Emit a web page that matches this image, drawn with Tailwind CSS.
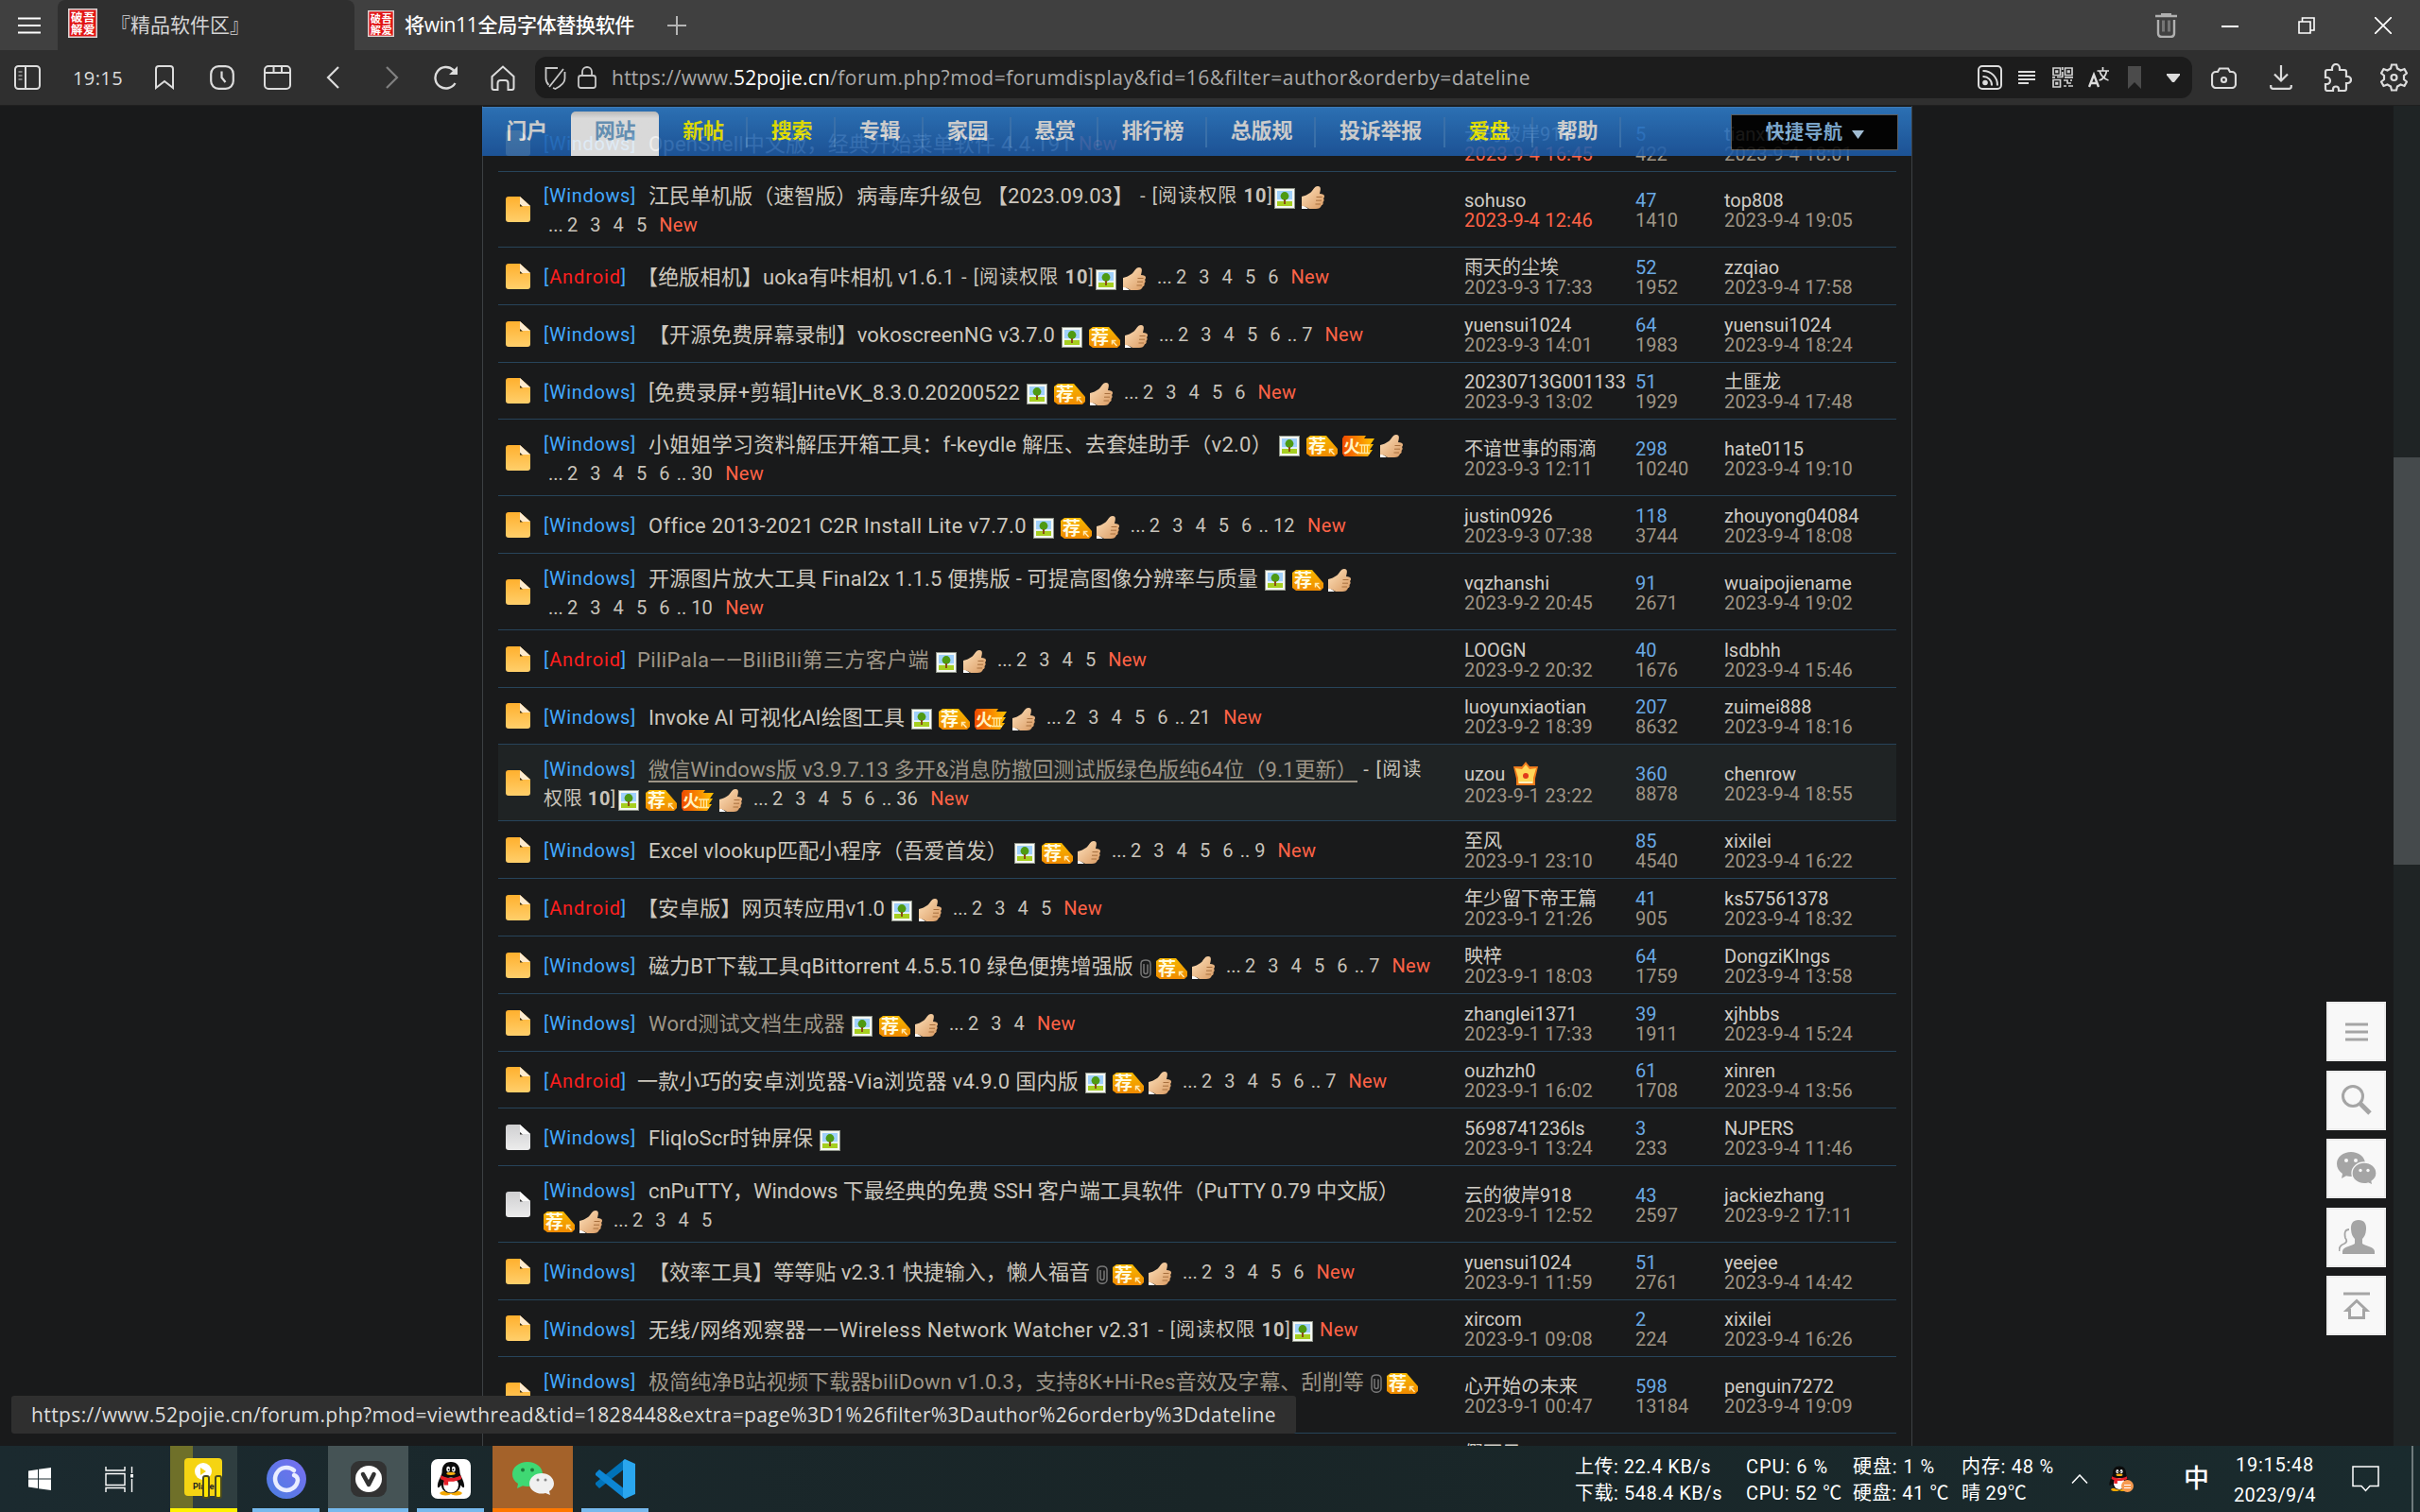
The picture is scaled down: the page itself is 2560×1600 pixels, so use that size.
<!DOCTYPE html>
<html lang="zh-CN">
<head>
<meta charset="utf-8">
<title>『精品软件区』</title>
<script src="https://cdn.jsdelivr.net/npm/@tailwindcss/browser@4"></script>
</head>
<body class="w-[2560px] h-[1600px] overflow-hidden bg-[#191a1b] font-['Roboto','Noto_Sans_CJK_SC',sans-serif] text-[#c8c3ba]">
<svg class="absolute w-0 h-0">
  <defs>
    <linearGradient id="gy" x1="0" y1="0" x2="0" y2="1"><stop offset="0" stop-color="#ffb02e"/><stop offset="1" stop-color="#ffcf6b"/></linearGradient>
    <linearGradient id="gw" x1="0" y1="0" x2="0" y2="1"><stop offset="0" stop-color="#cfcfd1"/><stop offset="1" stop-color="#ececec"/></linearGradient>
    <linearGradient id="gj" x1="0" y1="0" x2="0" y2="1"><stop offset="0" stop-color="#f6b800"/><stop offset="1" stop-color="#f08a00"/></linearGradient>
    <linearGradient id="gh" x1="0" y1="0" x2="1" y2="0"><stop offset="0" stop-color="#f04a00"/><stop offset="1" stop-color="#ffc400"/></linearGradient>
    <linearGradient id="gt" x1="0" y1="0" x2="1" y2="1"><stop offset="0" stop-color="#ffe2bc"/><stop offset="1" stop-color="#d99a62"/></linearGradient>
    <symbol id="doc-y" viewBox="0 0 26 27"><path d="M3 0H15L26 10V24a3 3 0 0 1-3 3H3a3 3 0 0 1-3-3V3a3 3 0 0 1 3-3z" fill="url(#gy)"/><path d="M15 0L26 10H17a2 2 0 0 1-2-2z" fill="#fdebcf"/><path d="M15 8v2.500h3z" fill="#3a2c10"/></symbol>
    <symbol id="doc-w" viewBox="0 0 26 27"><path d="M3 0H15L26 10V24a3 3 0 0 1-3 3H3a3 3 0 0 1-3-3V3a3 3 0 0 1 3-3z" fill="url(#gw)"/><path d="M15 0L26 10H17a2 2 0 0 1-2-2z" fill="#fafafa"/><path d="M15 8v2.500h3z" fill="#333"/></symbol>
    <symbol id="img" viewBox="0 0 22 22"><path d="M0 0H22V22H0z" fill="#8f9489"/><path d="M1 1H21V21H1z" fill="#f4f7f2"/><path d="M3 3H19V14H3z" fill="#9fd0fb"/><path d="M3 12H19V14H3z" fill="#dff0fb"/><path d="M3 14H19V19H3z" fill="#a6cf20"/><circle cx="11" cy="8.500" r="4.400" fill="#4e9a12"/><path d="M10 12h2v5h-2z" fill="#8a4d14"/></symbol>
    <symbol id="thumb" viewBox="0 0 24 24"><path d="M0 19l7 5H0z" fill="#fff"/><path d="M0 11C4 10 6 9 9 7 12 5 13 0 17 0c4 0 3 4 2 8 3 0 5 1 5 2.500c0 1.500-.5 2-1 2.500 1 1 .8 3-.5 4 .5 1 0 3-1.500 3.200C20 23 18 24 15 24H8C5 22 3 21 0 21z" fill="url(#gt)"/><path d="M15.500 11.500h6M15 15.200h6M14.500 19h5.500" stroke="#a8703f" stroke-width="1"/></symbol>
    <symbol id="clip" viewBox="0 0 12 20"><path d="M4 5v8.500a2 2 0 0 0 4 0V5.500M1 15V4.500C1 2 3 1 6 1s5 1 5 4V15a5 4.300 0 0 1-10 0z" fill="none" stroke="#777" stroke-width="1.500"/></symbol>
    <symbol id="jian" viewBox="0 0 33 22"><path d="M4 0H21L33 14V19l-3 3H4L0 19V3z" fill="url(#gj)"/><text x="2" y="18" font-size="19" font-weight="700" fill="#fffbe0" font-family="Noto Sans CJK SC">荐</text><path d="M29.500 20l-5-5.500M24.500 18.500v-4h4" stroke="#ffe9b0" stroke-width="1.500" fill="none"/></symbol>
    <symbol id="huo" viewBox="0 0 34 22"><path d="M2 0H25l-2 3H34l-4 6h3l-4 6h3l-5 7H2L0 19V3z" fill="url(#gh)"/><text x="1" y="18" font-size="18" font-weight="700" fill="#fff3c0" font-family="Noto Sans CJK SC">火</text><path d="M18 10h11M18 18.500h11M20.500 10v8M23.500 10v8M26.500 10v8" stroke="#ffe9a0" stroke-width="1.300"/></symbol>
    <symbol id="crown" viewBox="0 0 26 26"><path d="M13 0l4 5 9 0-3 13v7H3v-7L0 5h9z" fill="#ee7a1c"/><path d="M13 3l4 5 7-1-3 10v6H5v-6L2 7l7 1z" fill="#ffd75a"/><circle cx="13" cy="15" r="3" fill="#e03a1a"/><path d="M6 21h14v2H6z" fill="#fff2c0"/></symbol>
    <symbol id="seal" viewBox="0 0 30 30"><path d="M0 0H30V30H0z" fill="#d9d4d4"/><path d="M1.500 1.500H28.500V28.500H1.500z" fill="#e21414"/><g font-size="12" font-weight="700" fill="#fff" font-family="Noto Sans CJK SC"><text x="3" y="14">破</text><text x="15.500" y="14">吾</text><text x="3" y="26.500">解</text><text x="15.500" y="26.500">爱</text></g></symbol>
    <symbol id="qq" viewBox="0 0 34 38"><ellipse cx="11" cy="35" rx="6.500" ry="2.500" fill="#f5a800"/><ellipse cx="23" cy="35" rx="6.500" ry="2.500" fill="#f5a800"/><path d="M17 0c7 0 10 5 10 11 0 4 5 10 5 16 0 3-2 2-4-1-1 6-5 9-11 9S7 32 6 26c-2 3-4 4-4 1 0-6 5-12 5-16C7 5 10 0 17 0z" fill="#0b0b0b"/><ellipse cx="17" cy="26" rx="8.500" ry="8.500" fill="#fff"/><path d="M6 15c7 4 15 4 22 0l1 4c-8 4-16 4-24 0z" fill="#e6202a"/><path d="M9 19h5v7H9z" fill="#e6202a"/><ellipse cx="14" cy="8" rx="2" ry="3" fill="#fff"/><ellipse cx="20" cy="8" rx="2" ry="3" fill="#fff"/><circle cx="14.500" cy="8.500" r="1" fill="#000"/><circle cx="19.500" cy="8.500" r="1" fill="#000"/><ellipse cx="17" cy="13" rx="5" ry="1.800" fill="#f9b012"/></symbol>
  </defs>
</svg>

<div class="flex flex-col w-full h-full">
  <!-- tab strip -->
  <header class="flex items-center h-[53px] shrink-0 bg-[#404040] font-['Open_Sans','Noto_Sans_CJK_SC',sans-serif] text-[21px] whitespace-nowrap">
    <div class="w-[61px] shrink-0 flex justify-center"><svg class="w-6 h-[18px]" viewBox="0 0 24 18"><path d="M0 1.500h24M0 9h24M0 16.500h24" stroke="#fff" stroke-width="2"/></svg></div>
    <div class="w-[314px] shrink-0 h-full bg-[#2f2f2f] rounded-t-[8px] flex items-center pl-[11px] text-[#d4d4d4]">
      <svg class="w-[31px] h-[31px] mt-[-4px] shrink-0"><use href="#seal"/></svg>
      <span class="ml-[14px]" data-fit="147">『精品软件区』</span>
    </div>
    <div class="w-[312px] shrink-0 h-full flex items-center pl-[14px] text-white font-medium">
      <svg class="w-[28px] h-[28px] mt-[-3px] shrink-0"><use href="#seal"/></svg>
      <span class="ml-[11px]" data-fit="243">将win11全局字体替换软件</span>
    </div>
    <svg class="w-5 h-5 ml-[19px]" viewBox="0 0 20 20"><path d="M10 0v20M0 10h20" stroke="#b5b5b5" stroke-width="2"/></svg>
    <div class="ml-auto flex items-center pr-[30px]">
      <svg class="w-[23px] h-[26px] mr-[47px]" viewBox="0 0 23 26" fill="none" stroke="#b0b0b0"><path d="M0 3h23M6 1h11" stroke-width="2.500"/><path d="M3 7v14q0 4 4 4h9q4 0 4-4V7" stroke-width="2.400"/><path d="M8.500 7.500v12M14.500 7.500v12" stroke="#757575" stroke-width="3"/></svg>
      <svg class="w-[18px] h-[18px] mr-[63px]" viewBox="0 0 18 18"><path d="M0 10h18" stroke="#fff" stroke-width="2"/></svg>
      <svg class="w-[18px] h-[18px] mr-[63px]" viewBox="0 0 18 18" fill="none" stroke="#fff" stroke-width="1.600"><path d="M1 5h12v12H1zM4.500 5V1H17v13h-4"/></svg>
      <svg class="w-[18px] h-[18px]" viewBox="0 0 18 18"><path d="M0 0l18 18M18 0L0 18" stroke="#fff" stroke-width="1.700"/></svg>
    </div>
  </header>

  <!-- address bar -->
  <div class="flex items-center h-[59px] shrink-0 bg-[#2f2f2f] border-b border-[#1f1f1f] font-['Open_Sans','Noto_Sans_CJK_SC',sans-serif] whitespace-nowrap">
    <svg class="w-7 h-[26px] ml-[15px]" viewBox="0 0 28 26" fill="none" stroke="#dcdcdc" stroke-width="2"><rect x="1" y="1" width="26" height="24" rx="3.500"/><path d="M12 1v24"/><path d="M4.500 7h4M4.500 11h4M4.500 15h4" stroke="#999" stroke-width="1.500"/></svg>
    <span class="ml-[34px] mt-[2px] text-[20px] text-[#dcdcdc]" data-fit="53">19:15</span>
    <svg class="w-5 h-[26px] ml-[34px]" viewBox="0 0 20 26" fill="none" stroke="#dcdcdc" stroke-width="2"><path d="M1 24V4q0-3 3-3h12q3 0 3 3v20l-9-7z"/></svg>
    <svg class="w-[26px] h-[26px] ml-[38px]" viewBox="0 0 26 26" fill="none" stroke="#dcdcdc" stroke-width="2.200"><rect x="1.200" y="1.200" width="23.600" height="23.600" rx="8"/><path d="M12.500 6.500V13l4 5"/></svg>
    <svg class="w-[29px] h-[26px] ml-[31px]" viewBox="0 0 29 26" fill="none" stroke="#dcdcdc" stroke-width="2"><rect x="1" y="1" width="27" height="24" rx="4"/><path d="M1 8h27M10.500 1v7M19 1v7"/></svg>
    <svg class="w-[14px] h-6 ml-[37px]" viewBox="0 0 14 24" fill="none" stroke="#dcdcdc" stroke-width="2.200"><path d="M13 1L2 12l11 11"/></svg>
    <svg class="w-[14px] h-6 ml-[49px]" viewBox="0 0 14 24" fill="none" stroke="#808080" stroke-width="2.200"><path d="M1 1l11 11L1 23"/></svg>
    <svg class="w-[26px] h-[26px] ml-[37px]" viewBox="0 0 26 26" fill="none" stroke="#dcdcdc" stroke-width="2.400"><path d="M22.500 19A11.300 11.300 0 1 1 20.500 5l3.500 4"/><path d="M25 1v9h-9z" fill="#dcdcdc" stroke="none"/></svg>
    <svg class="w-[26px] h-[27px] ml-[34px]" viewBox="0 0 26 27" fill="none" stroke="#dcdcdc" stroke-width="2"><path d="M1.500 12L13 1.500 24.500 12v12q0 2-2 2h-4v-7a3 3 0 0 0-3-3h-5a3 3 0 0 0-3 3v7h-4q-2 0-2-2z"/></svg>
    <div class="flex items-center w-[1753px] shrink-0 h-[44px] ml-[21px] bg-[#1c1c1c] rounded-[12px] pl-[10px] pr-[13px]">
      <svg class="w-[23px] h-[25px]" viewBox="0 0 23 25" fill="none" stroke="#c8c8c8" stroke-width="1.800"><path d="M14 2H1.500v11q0 4 3 7M9 23l2.500 1c6-3 10-6 10-11V6M20 3L5 22"/></svg>
      <svg class="w-5 h-6 ml-[12px]" viewBox="0 0 20 24" fill="none" stroke="#c8c8c8" stroke-width="1.800"><rect x="1" y="10" width="18" height="13" rx="2.500"/><path d="M5 10V6a5 5 0 0 1 10 0v4"/></svg>
      <div class="ml-[16px] mt-[2px] text-[21px] text-[#a9a9a9] flex whitespace-pre"><span data-fit="129">https://www.</span><span class="text-white" data-fit="102">52pojie.cn</span><span data-fit="741">/forum.php?mod=forumdisplay&amp;fid=16&amp;filter=author&amp;orderby=dateline</span></div>
      <div class="ml-auto flex items-center">
        <svg class="w-[26px] h-[26px]" viewBox="0 0 26 26" fill="none" stroke="#dcdcdc" stroke-width="2"><rect x="1" y="1" width="24" height="24" rx="4"/><path d="M5.500 6A15 15 0 0 1 21 21.500M5.500 12a9 9 0 0 1 9.500 9.500"/><circle cx="8" cy="18.500" r="2.800" fill="#dcdcdc" stroke="none"/></svg>
        <svg class="w-[18px] h-[15px] ml-[17px]" viewBox="0 0 18 15"><path d="M0 1h18M0 5h18M0 9h18M0 13h11" stroke="#dcdcdc" stroke-width="1.800"/></svg>
        <svg class="w-[22px] h-[22px] ml-[18px]" viewBox="0 0 22 22" fill="none" stroke="#d0d0d0" stroke-width="1.700"><path d="M1 1h7.500v7.500H1zM13.500 1H21v7.500h-7.500zM1 13.500h7.500V21H1zM10.800 0v3M10.800 5v5.500H5M0 10.800h3M13 10.800h9M12 14h4v3h4M12 20h3M17 20h5M20 13v2"/><path d="M4 4h1.500v1.500H4zM16.500 4H18v1.500h-1.500zM4 16.500h1.500V18H4z"/></svg>
        <svg class="w-[23px] h-[22px] ml-[16px]" viewBox="0 0 23 22" fill="none" stroke="#dcdcdc"><path d="M1 21L6 8l5 13M3 17h6.500" stroke-width="2.400"/><path d="M9.500 4H22M15.500 0v4M11.500 14c4-1 7-4 8-10M12 4c1 4 5 9 9.500 10" stroke-width="1.700"/></svg>
        <svg class="w-[14px] h-6 ml-[19px]" viewBox="0 0 14 24"><path d="M0 0h14v24l-7-7-7 7z" fill="#4b4b4b"/></svg>
        <svg class="w-[14px] h-[9px] ml-[27px]" viewBox="0 0 14 9"><path d="M0 0h14v1.500L8 9H6L0 1.500z" fill="#dcdcdc"/></svg>
      </div>
    </div>
    <svg class="w-[27px] h-[23px] ml-[20px]" viewBox="0 0 27 23" fill="none" stroke="#dcdcdc" stroke-width="2.200"><path d="M1 9a4 4 0 0 1 4-4h2l2-3.500h9L20 5h2a4 4 0 0 1 4 4v9a4 4 0 0 1-4 4H5a4 4 0 0 1-4-4z"/><circle cx="13.500" cy="13.500" r="2.500"/></svg>
    <svg class="w-[24px] h-[26px] ml-[35px]" viewBox="0 0 24 26" fill="none" stroke="#dcdcdc" stroke-width="2.200"><path d="M12 0v16M5 9.500l7 7 7-7M1.200 21v1.500q0 2.300 2.300 2.300h17q2.300 0 2.300-2.300V21"/></svg>
    <svg class="w-[30px] h-[30px] ml-[33px]" viewBox="0 0 30 30" fill="none" stroke="#dcdcdc" stroke-width="2.200"><path d="M2 9q0-2 2-2h5V5a4 4 0 0 1 8 0v2h5q2 0 2 2v5h1.500a3.500 3.500 0 0 1 0 7H24v6q0 2-2 2h-6v-1.500a3 3 0 0 0-6 0V29H4q-2 0-2-2v-5h1.500a3.500 3.500 0 0 0 0-7H2z"/></svg>
    <svg class="w-[29px] h-[30px] ml-[30px]" viewBox="0 0 29 30" fill="none" stroke="#dcdcdc" stroke-width="2.200"><path d="M12 1.500h5l1 4 3.500 2 4-1.500 2.500 4.500-3 2.500v4l3 2.500-2.500 4.500-4-1.500-3.500 2-1 4h-5l-1-4-3.500-2-4 1.500L1 19.500 4 17v-4L1 10.500 3.500 6l4 1.500 3.500-2z"/><circle cx="14.500" cy="15" r="3"/></svg>
  </div>

  <!-- page -->
  <div class="relative flex h-[1418px] shrink-0 overflow-hidden">
    <main class="relative ml-[510px] w-[1513px] border-x border-[#3c4043]">
      <nav class="absolute z-10 left-[-1px] top-[1px] w-[1512px] h-[52px] flex items-stretch opacity-[.88] bg-linear-to-b from-[#2f7cc8] to-[#1d5aa6] text-[22px] font-bold text-[#e4e4e4] border-t border-[#4288cc]" id="nav"></nav>
      <div class="px-4 pt-[9px]" id="list"></div>
    </main>
    <aside class="flex flex-col gap-[9.500px] ml-auto mr-[8px] mt-[948px]">
      <div class="w-[63px] h-[63px] bg-[#f8f8f8] border-2 border-[#ececec] flex items-center justify-center"><svg class="w-6 h-5" viewBox="0 0 24 20"><path d="M0 2h24M0 10h24M0 18h24" stroke="#a5a5a5" stroke-width="3"/></svg></div>
      <div class="w-[63px] h-[63px] bg-[#f8f8f8] border-2 border-[#ececec] flex items-center justify-center"><svg class="w-8 h-8" viewBox="0 0 32 32" fill="none" stroke="#a5a5a5"><circle cx="12" cy="12" r="10.500" stroke-width="3"/><path d="M20 20l10 10" stroke-width="5"/></svg></div>
      <div class="w-[63px] h-[63px] bg-[#f8f8f8] border-2 border-[#ececec] flex items-center justify-center"><svg class="w-[42px] h-[35px]" viewBox="0 0 42 35"><path d="M15 0c8 0 15 5 15 12.500S23 26 15 26q-3 0-5-.8L5 28l1-5C2 20 0 16.500 0 12.500 0 5 7 0 15 0z" fill="#a5a5a5"/><path d="M29 11c7 0 13 5 13 11.500 0 3.500-2 6.500-5 8.500l1 4-5-2q-2 .7-4 .7c-7 0-13-4.700-13-11.200S22 11 29 11z" fill="#a5a5a5" stroke="#f8f8f8" stroke-width="1.300"/><g fill="#f8f8f8"><circle cx="10" cy="9" r="2"/><circle cx="20" cy="9" r="2"/><circle cx="25" cy="19.500" r="1.700"/><circle cx="33" cy="19.500" r="1.700"/></g></svg></div>
      <div class="w-[63px] h-[63px] bg-[#f8f8f8] border-2 border-[#ececec] flex items-center justify-center"><svg class="w-[38px] h-9" viewBox="0 0 38 36"><path d="M21 0c6 0 8.500 4 8 10-.3 5-2 8-4 10v5c4 3 12 3 13 8v3H4v-3c1-5 9-5 13-8v-5c-2-2-3.700-5-4-10-.5-6 2-10 8-10z" fill="#a5a5a5"/><path d="M11 10q-6 0-4 9 3 4-1 6-6 2-5.500 8" fill="none" stroke="#a5a5a5" stroke-width="1.800"/></svg></div>
      <div class="w-[63px] h-[63px] bg-[#f8f8f8] border-2 border-[#ececec] flex items-center justify-center"><svg class="w-[30px] h-[30px]" viewBox="0 0 30 30" fill="none" stroke="#a5a5a5" stroke-width="3"><path d="M1 2h28M15 9.500L4.500 19.500h3v8h15v-8h3z"/></svg></div>
    </aside>
    <div class="w-7 bg-[#1f2425] pt-[372px]"><div class="h-[431px] bg-[#454a4c]"></div></div>
    <div class="absolute z-20 left-[12px] top-[1365px] w-[1359px] h-[40px] rounded-[3px] bg-[#2f2f2f] flex items-center pl-[21px] pt-[2px] text-[21px] text-[#dcdcdc] whitespace-nowrap font-['Open_Sans',sans-serif]"><span data-fit="1317">https://www.52pojie.cn/forum.php?mod=viewthread&amp;tid=1828448&amp;extra=page%3D1%26filter%3Dauthor%26orderby%3Ddateline</span></div>
  </div>

  <!-- taskbar -->
  <footer class="flex h-[70px] shrink-0 bg-linear-to-r from-[#1b2a2f] via-[#192527] to-[#1a2b2e] text-white text-[20px] whitespace-nowrap">
    <div class="w-[84px] flex items-center justify-center"><svg class="w-6 h-6" viewBox="0 0 24 24"><path d="M0 3.500l10-1.500v9.500H0zM11 1.800L24 0v11.500H11zM0 12.500h10V22L0 20.500zM11 12.500h13V24l-13-1.800z" fill="#fff"/></svg></div>
    <div class="w-[83px] flex items-center justify-center"><svg class="w-[30px] h-[27px]" viewBox="0 0 30 27" fill="none" stroke="#fff" stroke-width="1.400"><path d="M1 0v4h20V0M1 7.500h20v12H1zM1 27v-4.500h20V27M28.500 0v7M28.500 13v14"/><path d="M28.500 8v3.500" stroke-width="3"/></svg></div>
    <div class="ml-[13px] w-[71px] border-b-4 border-[#fff200] bg-linear-to-r from-[#6f7029] from-34% to-[#2f3e40] to-34% flex items-center justify-center">
      <svg class="w-[42px] h-[44px] mt-[4px]" viewBox="0 0 42 44"><rect width="40" height="40" rx="4" fill="#f5d413"/><circle cx="20" cy="14" r="9" fill="#fff"/><path d="M17 10v8l6-4z" fill="#f5d413"/><text x="9" y="33" font-size="9" font-weight="700" fill="#222" font-family="Roboto">Player</text><rect x="20" y="19" width="6" height="23" rx="2" fill="#ffe600" stroke="#4a4a20" stroke-width="2"/><rect x="33" y="19" width="6" height="23" rx="2" fill="#ffe600" stroke="#4a4a20" stroke-width="2"/></svg></div>
    <div class="ml-4 w-[71px] border-b-4 border-[#76b9ed] flex items-center justify-center"><svg class="w-[42px] h-[42px] mt-1" viewBox="0 0 42 42"><defs><linearGradient id="gp" x1="1" y1="0" x2="0" y2="1"><stop offset="0" stop-color="#7a6ef2"/><stop offset="1" stop-color="#4a7ee0"/></linearGradient></defs><circle cx="21" cy="21" r="21" fill="url(#gp)"/><path d="M29 12a12 12 0 1 0 4 10q-.5-4-4-5" fill="none" stroke="#e9edff" stroke-width="4.500" stroke-linecap="round"/></svg></div>
    <div class="ml-[9px] w-[85px] border-b-4 border-[#76b9ed] bg-[#455355] flex items-center justify-center"><svg class="w-[38px] h-[38px] mt-1" viewBox="0 0 38 38"><rect width="38" height="38" rx="9" fill="#323232"/><circle cx="19" cy="19" r="14" fill="#fff"/><path d="M13 14l6 11 5.500-11" fill="none" stroke="#323232" stroke-width="4.500" stroke-linecap="round" stroke-linejoin="round"/></svg></div>
    <div class="ml-[9px] w-[71px] border-b-4 border-[#76b9ed] flex items-center justify-center"><div class="w-[42px] h-[42px] mt-1 rounded-[7px] bg-white flex items-center justify-center"><svg class="w-[32px] h-[36px]"><use href="#qq"/></svg></div></div>
    <div class="ml-[9px] w-[85px] border-b-4 border-[#ff7800] bg-[#a4622a] flex items-center justify-center"><svg class="w-[44px] h-[36px] mt-1" viewBox="0 0 44 36"><path d="M16 0c9 0 16 5.500 16 13s-7 13-16 13q-3 0-5-.8L5 28l1-5C2 20.500 0 17 0 13 0 5.500 7 0 16 0z" fill="#3fd873"/><path d="M31 12c7 0 13 4.500 13 11 0 3.500-2 6-5 8l1 4-5-2q-2 .6-4 .6c-7 0-13-4.500-13-10.600S24 12 31 12z" fill="#f0f0f0"/><g fill="#1d7a3c"><circle cx="11" cy="8.500" r="2"/><circle cx="21" cy="8.500" r="2"/></g><g fill="#888"><circle cx="27" cy="19" r="1.500"/><circle cx="35" cy="19" r="1.500"/></g></svg></div>
    <div class="ml-[9px] w-[71px] border-b-4 border-[#76b9ed] flex items-center justify-center"><svg class="w-[42px] h-[42px] mt-1" viewBox="0 0 42 42"><path d="M0 27l4 4 27-21V0L0 25z" fill="#0072b8"/><path d="M0 15l4-4 27 21v10L0 17z" fill="#0d86d4"/><path d="M31 0l11 5v32l-11 5-2-2V2z" fill="#2aa6ee"/></svg></div>
    <div class="ml-auto flex items-center">
      <div class="grid grid-cols-[181px_113px_115px_116px] leading-[28px] mt-[2px]">
        <div><span data-fit="144">上传: 22.4 KB/s</span></div><div><span data-fit="87">CPU: 6 %</span></div><div><span data-fit="87">硬盘: 1 %</span></div><div><span data-fit="98">内存: 48 %</span></div>
        <div><span data-fit="156">下载: 548.4 KB/s</span></div><div><span data-fit="102">CPU: 52 ℃</span></div><div><span data-fit="102">硬盘: 41 ℃</span></div><div><span data-fit="69">晴 29℃</span></div>
      </div>
      <svg class="w-[18px] h-[10px]" viewBox="0 0 18 10"><path d="M1 9.500l8-8.500 8 8.500" fill="none" stroke="#fff" stroke-width="1.500"/></svg>
      <div class="relative ml-[21px] w-[27px] h-[28px]"><svg class="w-[24px] h-[28px]"><use href="#qq"/></svg><div class="absolute right-0 bottom-0 w-[13px] h-[13px] rounded-full bg-[#f79a50] flex flex-col items-center justify-center gap-[2px]"><div class="w-[7px] h-px bg-white"></div><div class="w-[7px] h-px bg-white"></div></div></div>
      <span class="ml-[53px] text-[27px] leading-[30px] font-medium">中</span>
      <div class="ml-[26px] w-[87px] flex flex-col items-center leading-[32px] mt-[2px]"><span data-fit="83">19:15:48</span><span data-fit="87">2023/9/4</span></div>
      <svg class="ml-[38px] w-[29px] h-[28px]" viewBox="0 0 29 28"><path d="M1 1h27v20.500h-9l-4.500 5-4.500-5H1z" fill="none" stroke="#fff" stroke-width="1.500"/></svg>
      <div class="ml-[34px] mr-[7px] w-[2px] h-[70px] bg-[#6f7a7c]"></div>
    </div>
  </footer>
</div>

<script>
const P = ' - [阅读权限 <b>10</b>]';
// h: row height, a: Android, t: title, w: title width, p: permission note, ic: icons, pg: pages, n: new mark, o: visited
const rows = [
 {h:61, t:'OpenShell中文版，经典开始菜单软件 4.4.191', w:448, n:1, u:'云的彼岸918', d:'2023-9-4 16:45', hot:1, r:5, v:422, l:'tianxing', e:'2023-9-4 18:01'},
 {h:80, t:'江民单机版（速智版）病毒库升级包 【2023.09.03】', w:513, p:1, ic:'it', br:1, pg:'2 3 4 5', n:1, u:'sohuso', d:'2023-9-4 12:46', hot:1, r:47, v:1410, l:'top808', e:'2023-9-4 19:05'},
 {h:61, a:1, t:'【绝版相机】uoka有咔相机 v1.6.1', w:336, p:1, ic:'it', pg:'2 3 4 5 6', n:1, u:'雨天的尘埃', d:'2023-9-3 17:33', r:52, v:1952, l:'zzqiao', e:'2023-9-4 17:58'},
 {h:61, t:'【开源免费屏幕录制】vokoscreenNG v3.7.0', w:430, ic:'ijt', pg:'2 3 4 5 6 .. 7', n:1, u:'yuensui1024', d:'2023-9-3 14:01', r:64, v:1983, l:'yuensui1024', e:'2023-9-4 18:24'},
 {h:60, t:'[免费录屏+剪辑]HiteVK_8.3.0.20200522', w:393, ic:'ijt', pg:'2 3 4 5 6', n:1, u:'20230713G001133', d:'2023-9-3 13:02', r:51, v:1929, l:'土匪龙', e:'2023-9-4 17:48'},
 {h:81, t:'小姐姐学习资料解压开箱工具：f-keydle 解压、去套娃助手（v2.0）', w:660, ic:'ijht', br:1, pg:'2 3 4 5 6 .. 30', n:1, u:'不谙世事的雨滴', d:'2023-9-3 12:11', r:298, v:10240, l:'hate0115', e:'2023-9-4 19:10'},
 {h:61, t:'Office 2013-2021 C2R Install Lite v7.7.0', w:398, ic:'ijt', pg:'2 3 4 5 6 .. 12', n:1, u:'justin0926', d:'2023-9-3 07:38', r:118, v:3744, l:'zhouyong04084', e:'2023-9-4 18:08'},
 {h:81, t:'开源图片放大工具 Final2x 1.1.5 便携版 - 可提高图像分辨率与质量', w:645, ic:'ijt', br:1, pg:'2 3 4 5 6 .. 10', n:1, u:'vqzhanshi', d:'2023-9-2 20:45', r:91, v:2671, l:'wuaipojiename', e:'2023-9-4 19:02'},
 {h:61, a:1, o:1, t:'PiliPala——BiliBili第三方客户端', w:309, ic:'it', pg:'2 3 4 5', n:1, u:'LOOGN', d:'2023-9-2 20:32', r:40, v:1676, l:'lsdbhh', e:'2023-9-4 15:46'},
 {h:60, t:'Invoke AI 可视化AI绘图工具', w:271, ic:'ijht', pg:'2 3 4 5 6 .. 21', n:1, u:'luoyunxiaotian', d:'2023-9-2 18:39', r:207, v:8632, l:'zuimei888', e:'2023-9-4 18:16'},
 {h:81, o:1, hov:1, t:'微信Windows版 v3.9.7.13 多开&amp;消息防撤回测试版绿色版纯64位（9.1更新）', w:750, ic:'ijht', pg:'2 3 4 5 6 .. 36', n:1, u:'uzou', d:'2023-9-1 23:22', r:360, v:8878, l:'chenrow', e:'2023-9-4 18:55'},
 {h:61, t:'Excel vlookup匹配小程序（吾爱首发）', w:380, ic:'ijt', pg:'2 3 4 5 6 .. 9', n:1, u:'至风', d:'2023-9-1 23:10', r:85, v:4540, l:'xixilei', e:'2023-9-4 16:22'},
 {h:61, a:1, t:'【安卓版】网页转应用v1.0', w:262, ic:'it', pg:'2 3 4 5', n:1, u:'年少留下帝王篇', d:'2023-9-1 21:26', r:41, v:905, l:'ks57561378', e:'2023-9-4 18:32'},
 {h:61, t:'磁力BT下载工具qBittorrent 4.5.5.10 绿色便携增强版', w:513, ic:'cjt', pg:'2 3 4 5 6 .. 7', n:1, u:'映梓', d:'2023-9-1 18:03', r:64, v:1759, l:'DongziKIngs', e:'2023-9-4 13:58'},
 {h:61, o:1, t:'Word测试文档生成器', w:208, ic:'ijt', pg:'2 3 4', n:1, u:'zhanglei1371', d:'2023-9-1 17:33', r:39, v:1911, l:'xjhbbs', e:'2023-9-4 15:24'},
 {h:60, a:1, t:'一款小巧的安卓浏览器-Via浏览器 v4.9.0 国内版', w:467, ic:'ijt', pg:'2 3 4 5 6 .. 7', n:1, u:'ouzhzh0', d:'2023-9-1 16:02', r:61, v:1708, l:'xinren', e:'2023-9-4 13:56'},
 {h:61, g:1, t:'FliqloScr时钟屏保', w:174, ic:'i', u:'5698741236ls', d:'2023-9-1 13:24', r:3, v:233, l:'NJPERS', e:'2023-9-4 11:46'},
 {h:81, g:1, t:'cnPuTTY，Windows 下最经典的免费 SSH 客户端工具软件（PuTTY 0.79 中文版）', w:794, br:2, ic:'jt', pg:'2 3 4 5', u:'云的彼岸918', d:'2023-9-1 12:52', r:43, v:2597, l:'jackiezhang', e:'2023-9-2 17:11'},
 {h:61, t:'【效率工具】等等贴 v2.3.1 快捷输入，懒人福音', w:467, ic:'cjt', pg:'2 3 4 5 6', n:1, u:'yuensui1024', d:'2023-9-1 11:59', r:51, v:2761, l:'yeejee', e:'2023-9-4 14:42'},
 {h:60, t:'无线/网络观察器——Wireless Network Watcher v2.31', w:532, p:1, ic:'i', n:1, u:'xircom', d:'2023-9-1 09:08', r:2, v:224, l:'xixilei', e:'2023-9-4 16:26'},
 {h:81, o:1, t:'极简纯净B站视频下载器biliDown v1.0.3，支持8K+Hi-Res音效及字幕、刮削等', w:757, ic:'cj', br:3, u:'心开始の未来', d:'2023-9-1 00:47', r:598, v:13184, l:'penguin7272', e:'2023-9-4 19:09'},
 {h:61, t:'', w:0, u:'假面目', d:'', r:40, v:'', l:'hxh.b', e:''},
];
const ICON = {
 i:'<svg class="w-[22px] h-[22px] mr-[7px] mt-1 shrink-0"><use href="#img"/></svg>',
 j:'<svg class="w-[33px] h-[22px] mr-[5px] mt-1 shrink-0"><use href="#jian"/></svg>',
 h:'<svg class="w-[34px] h-[22px] mr-[6px] mt-1 shrink-0"><use href="#huo"/></svg>',
 t:'<svg class="w-[24px] h-[24px] mr-[12px] mt-[3px] shrink-0"><use href="#thumb"/></svg>',
 c:'<svg class="w-[12px] h-[20px] mr-[5px] mt-1 shrink-0"><use href="#clip"/></svg>'};
function pages(r){
 if(!r.pg) return '';
 const p=r.pg.split(' ');
 return '<span class="w-[20px] shrink-0">...</span>'+p.map((x,i)=>{
  if(x==='..') return '<span class="w-[15.500px] shrink-0">..</span>';
  if(p[i+1]==='..') return '<span class="w-[18.500px] shrink-0">'+x+'</span>';
  return x.length>1?'<span class="w-[36px] shrink-0">'+x+'</span>':'<span class="w-[24.300px] shrink-0">'+x+'</span>';
 }).join('');
}
function row(r){
 const tag = !r.t ? '' : r.a
  ? '<span class="w-[99px] shrink-0 text-[#43a9ff]"><span data-fit="88">[<span class="text-[#ff1f1f]">Android</span>]</span></span>'
  : '<span class="w-[111px] shrink-0 text-[#43a9ff]"><span data-fit="98">[Windows]</span></span>';
 const cls = r.hov ? 'text-[#9d9587] underline underline-offset-4 decoration-2' : r.o ? 'text-[#9d9587]' : 'text-[#ccc7be]';
 const title = r.t ? '<span class="text-[22px] '+cls+'" data-fit="'+r.w+'">'+r.t+'</span>' : '';
 const perm = r.p ? '<span class="ml-[1px] text-[20px]" data-fit="147">'+P+'</span><span class="w-[1px]"></span>' : '<span class="w-[7px]"></span>';
 const ics = [...(r.ic||'')].map(c=>ICON[c]).join('');
 const pg = pages(r), nw = r.n ? '<span class="text-[#ff6347]" data-fit="41">New</span>' : '';
 const L = s => '<div class="flex items-center h-[31px] whitespace-pre text-[20px]">'+s+'</div>';
 const head = tag+title;
 let body;
 if(r.hov) body = L(head+'<span data-fit="69"> - [阅读</span>') + L('<span data-fit="77">权限 <b>10</b>]</span><span class="w-[2px]"></span>'+ics+pg+nw);
 else if(r.br===1) body = L(head+perm+ics) + L('<span class="w-[5px]"></span>'+pg+nw);
 else if(r.br===2) body = L(head) + L(ics+pg+nw);
 else if(r.br===3) body = L(head+perm+ics) + L('');
 else body = L(head+perm+ics+pg+nw);
 const crown = r.hov ? '<svg class="w-[26px] h-[26px] ml-[9px]"><use href="#crown"/></svg>' : '';
 const date = s => s ? '<span data-fit="136">'+s+'</span>' : '&nbsp;';
 const el = document.createElement('div');
 el.className = 'flex items-center border-b border-[#27445a] whitespace-nowrap text-[20px] leading-[21px] ' + (r.hov ? 'bg-[#1f2324]' : '');
 el.style.height = r.h+'px';
 el.innerHTML =
  '<svg class="w-[26px] h-[27px] ml-[8px] mr-[14px] shrink-0"><use href="#'+(r.g?'doc-w':'doc-y')+'"/></svg>'+
  '<div class="w-[974px] shrink-0 pt-[3px]">'+body+'</div>'+
  '<div class="w-[181px] shrink-0 pt-[3px]"><div class="flex items-center text-[#d0ccc5]"><span>'+r.u+'</span>'+crown+'</div><div class="'+(r.hot?'text-[#ff6347]':'text-[#9f9586]')+'">'+date(r.d)+'</div></div>'+
  '<div class="w-[94px] shrink-0 pt-[3px]"><div class="text-[#6aa9e4]">'+r.r+'</div><div class="text-[#9f9586]">'+(r.v||'&nbsp;')+'</div></div>'+
  '<div class="shrink-0 pt-[3px]"><div class="text-[#d0ccc5]">'+r.l+'</div><div class="text-[#9f9586]">'+date(r.e)+'</div></div>';
 return el;
}
const list = document.getElementById('list');
rows.forEach(r=>list.appendChild(row(r)));

const nav = document.getElementById('nav');
nav.innerHTML = [['门户',94],['网站',93,1],['新帖',94,2],['搜索',93,2],['专辑',93],['家园',93],['悬赏',92],['排行榜',115],['总版规',115],['投诉举报',137],['爱盘',93,2],['帮助',93]].map(([t,w,k])=>{
  const f = t.length*21.8;
  if(k===1) return '<div class="w-[93px] mt-[4px] rounded-t-[5px] bg-linear-to-b from-[#cfcfcf] via-[#f4f4f4] via-15% to-[#f4f4f4] text-[#6f9fc6] flex justify-center pt-[5px] leading-[32px]"><span data-fit="'+f+'">'+t+'</span></div>';
  return '<div class="flex justify-center shrink-0 pt-[9px] leading-[32px] relative '+(k===2?'text-[#f6f200]':'')+'" style="width:'+w+'px"><span data-fit="'+f+'">'+t+'</span>'+(t==='门户'?'':'<i class="absolute right-0 top-[10px] w-[2px] h-[32px] bg-[#3f7cbd]"></i>')+'</div>';
}).join('') + '<div class="ml-auto mr-[14px] mt-[7px] w-[177px] h-[38px] bg-black border border-[#666] flex items-center justify-center gap-[9px] text-[20px] text-[#86b6df]"><span data-fit="82">快捷导航</span><svg class="w-[13px] h-[9px] mt-1" viewBox="0 0 13 9"><path d="M0 0h13L6.500 9z" fill="#b5d4ee"/></svg></div>';

function fit(){
  document.querySelectorAll('[data-fit]').forEach(el=>{
    el.style.letterSpacing = '0px';
    el.style.flexShrink = '0';
    el.style.whiteSpace = 'pre';
    if(getComputedStyle(el).display==='inline') el.style.display='inline-block';
    const w = parseFloat(el.dataset.fit), n = [...el.textContent].length;
    el.style.letterSpacing = ((w-el.getBoundingClientRect().width)/n)+'px';
  });
}
fit();
addEventListener('load', ()=>{ fit(); requestAnimationFrame(fit); setTimeout(fit,60); setTimeout(fit,250); });
document.fonts.ready.then(fit);
new ResizeObserver(fit).observe(list);
</script>
</body>
</html>
